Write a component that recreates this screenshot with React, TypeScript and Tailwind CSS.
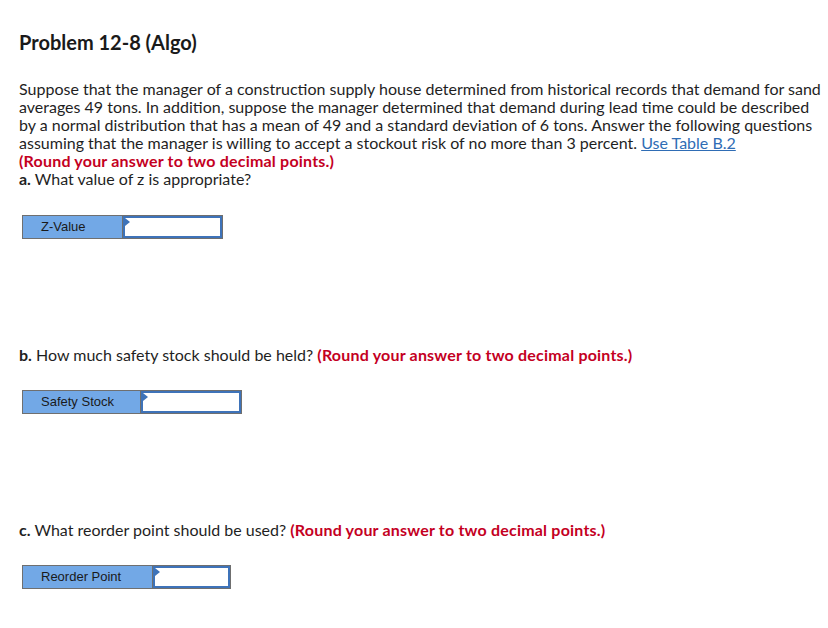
import React from "react";

function Field({ label, labelW, inputW }: { label: string; labelW: number; inputW: number }) {
  return (
    <div className="flex h-[24px] border border-[#6f6f6f]" style={{ width: labelW + inputW + 2 }}>
      <div
        className="flex items-center bg-[#72a8e6] pl-[18px] text-[13px] text-[#1a1a1a] border-r border-[#6f6f6f]"
        style={{ width: labelW, fontFamily: '"Liberation Sans", Arial, sans-serif' }}
      >
        {label}
      </div>
      <div className="relative flex-1 bg-white border-2 border-[#3e73b9]">
        <div className="absolute left-0 top-0 w-0 h-0 border-t-[4px] border-b-[4px] border-l-[5px] border-t-transparent border-b-transparent border-l-[#3e73b9]" />
      </div>
    </div>
  );
}

export default function App() {
  const font = { fontFamily: 'Lato, "Open Sans", sans-serif' };
  return (
    <div className="w-[828px] h-[628px] bg-white text-[#1f1f1f] pl-[19px]" style={font}>
      <div className="pt-[30px] text-[20px] font-bold leading-[24px] text-[#1a1a1a]">Problem 12-8 (Algo)</div>
      <div className="mt-[26px] text-[16px] leading-[18px] whitespace-nowrap">
        <div>Suppose that the manager of a construction supply house determined from historical records that demand for sand</div>
        <div>averages 49 tons. In addition, suppose the manager determined that demand during lead time could be described</div>
        <div>by a normal distribution that has a mean of 49 and a standard deviation of 6 tons. Answer the following questions</div>
        <div>
          assuming that the manager is willing to accept a stockout risk of no more than 3 percent.{" "}
          <span className="text-[#2f6db5] underline">Use Table B.2</span>
        </div>
        <div className="font-bold text-[#c4001f] tracking-[0.2px]">(Round your answer to two decimal points.)</div>
        <div>
          <span className="font-bold">a.</span> What value of z is appropriate?
        </div>
      </div>
      <div className="mt-[27px] ml-[3px]">
        <Field label="Z-Value" labelW={100} inputW={99} />
      </div>
      <div className="mt-[107px] text-[16px] leading-[18px] whitespace-nowrap">
        <span className="font-bold">b.</span> How much safety stock should be held?{" "}
        <span className="font-bold text-[#c4001f] tracking-[0.2px]">(Round your answer to two decimal points.)</span>
      </div>
      <div className="mt-[26px] ml-[3px]">
        <Field label="Safety Stock" labelW={118} inputW={100} />
      </div>
      <div className="mt-[107px] text-[16px] leading-[18px] whitespace-nowrap">
        <span className="font-bold">c.</span> What reorder point should be used?{" "}
        <span className="font-bold text-[#c4001f] tracking-[0.2px]">(Round your answer to two decimal points.)</span>
      </div>
      <div className="mt-[26px] ml-[3px]">
        <Field label="Reorder Point" labelW={130} inputW={77} />
      </div>
    </div>
  );
}
